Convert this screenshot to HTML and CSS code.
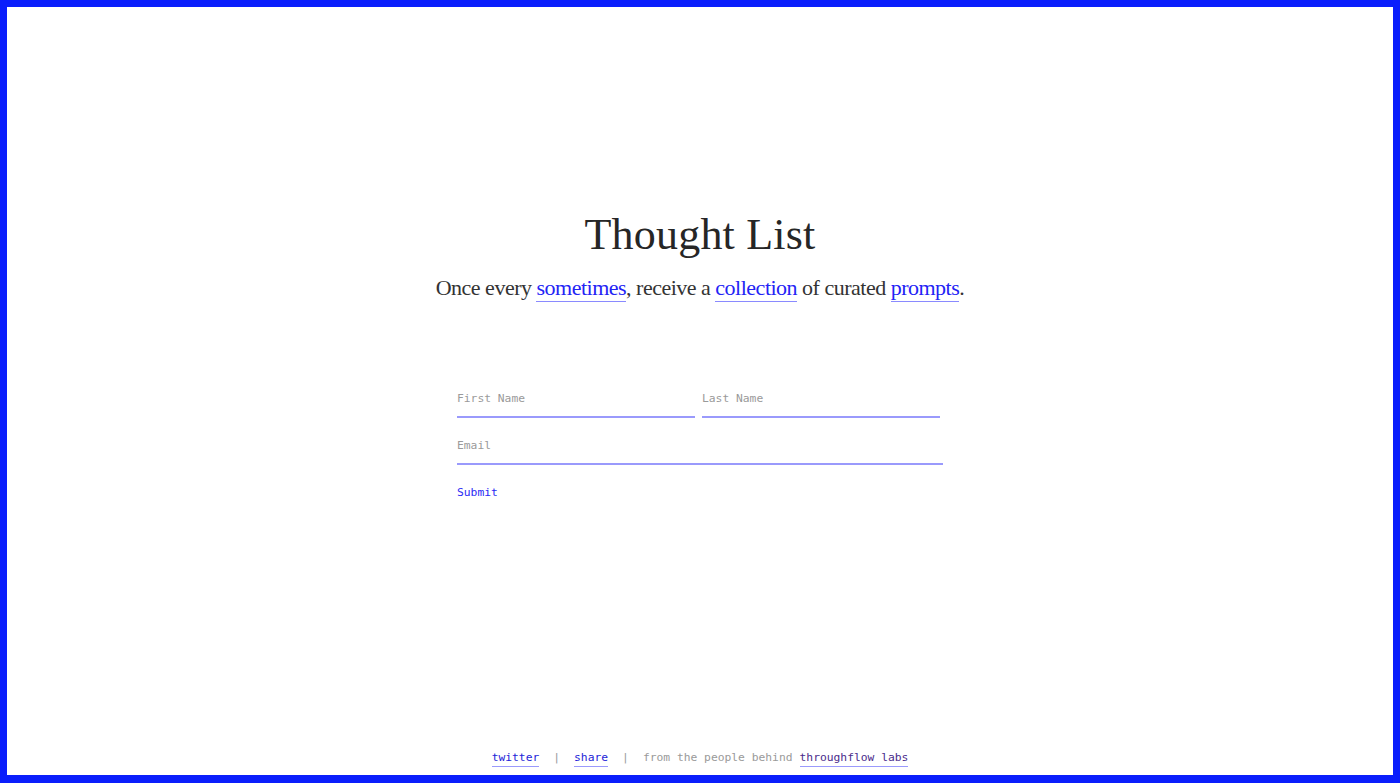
FILE: index.html
```html
<!DOCTYPE html>
<html lang="en">
<head>
<meta charset="utf-8">
<title>Thought List</title>
<link rel="stylesheet" href="styles.css">
</head>
<body>
<div class="frame">
  <main class="main">
    <header class="intro">
      <h1 class="title">Thought List</h1>
      <p class="tagline">Once every <a href="#" class="ink">sometimes</a>, receive a <a href="#" class="ink">collection</a> of curated <a href="#" class="ink">prompts</a>.</p>
    </header>
    <form class="signup">
      <div class="row">
        <input class="field" type="text" placeholder="First Name">
        <input class="field" type="text" placeholder="Last Name">
      </div>
      <div class="row">
        <input class="field field-wide" type="email" placeholder="Email">
      </div>
      <button class="submit" type="button">Submit</button>
    </form>
  </main>
  <footer class="footer">
    <a href="#" class="foot-link">twitter</a>
    <span class="sep">|</span>
    <a href="#" class="foot-link">share</a>
    <span class="sep">|</span>
    <span class="credit">from the people behind</span>
    <a href="#" class="foot-link visited">throughflow labs</a>
  </footer>
</div>
</body>
</html>
```

FILE: styles.css
```css
* { box-sizing: border-box; }

html, body {
  margin: 0;
  padding: 0;
  background: #ffffff;
}

.frame {
  height: 100vh;
  border: 7px solid #0a1efc;
  border-bottom-width: 8px;
  display: flex;
  flex-direction: column;
  align-items: center;
}

.main {
  flex: 1;
  display: flex;
  flex-direction: column;
  align-items: center;
  padding-top: 200px;
}

.intro {
  text-align: center;
}

.title {
  margin: 0;
  font-family: "Liberation Serif", "Times New Roman", serif;
  font-weight: normal;
  font-size: 44px;
  line-height: 56px;
  color: #262626;
  letter-spacing: 0.2px;
}

.tagline {
  margin: 10px 0 0;
  font-family: "Liberation Serif", "Times New Roman", serif;
  font-size: 22px;
  line-height: 30px;
  color: #333333;
  letter-spacing: -0.5px;
}

.ink {
  color: #2323f5;
  text-decoration: none;
  border-bottom: 1px solid #8a8aff;
  padding-bottom: 1px;
}

.signup {
  margin-top: 88px;
  width: 486px;
  display: flex;
  flex-direction: column;
  gap: 20px;
}

.row {
  display: flex;
  gap: 7px;
}

.field {
  width: 238px;
  border: none;
  border-bottom: 2px solid #9a9afc;
  padding: 0 0 9px 0;
  font-family: "DejaVu Sans Mono", "Liberation Mono", monospace;
  font-size: 11.3px;
  line-height: 16px;
  color: #333;
  background: transparent;
  outline: none;
}

.field-wide {
  width: 486px;
}

.field::placeholder {
  color: #9a9a9a;
}

.submit {
  align-self: flex-start;
  margin-top: 0;
  padding: 0;
  border: none;
  background: none;
  font-family: "DejaVu Sans Mono", "Liberation Mono", monospace;
  font-size: 11.3px;
  line-height: 16px;
  color: #2a2af5;
  cursor: pointer;
}

.footer {
  padding-bottom: 8px;
  font-family: "DejaVu Sans Mono", "Liberation Mono", monospace;
  font-size: 11.3px;
  line-height: 16px;
  color: #9a9a9a;
  display: flex;
  align-items: baseline;
}

.foot-link {
  color: #2424d8;
  text-decoration: none;
  border-bottom: 1px solid #9a9afc;
}

.foot-link.visited {
  color: #4a2c8c;
  margin-left: 7px;
}

.sep {
  margin: 0 14px;
}
```
